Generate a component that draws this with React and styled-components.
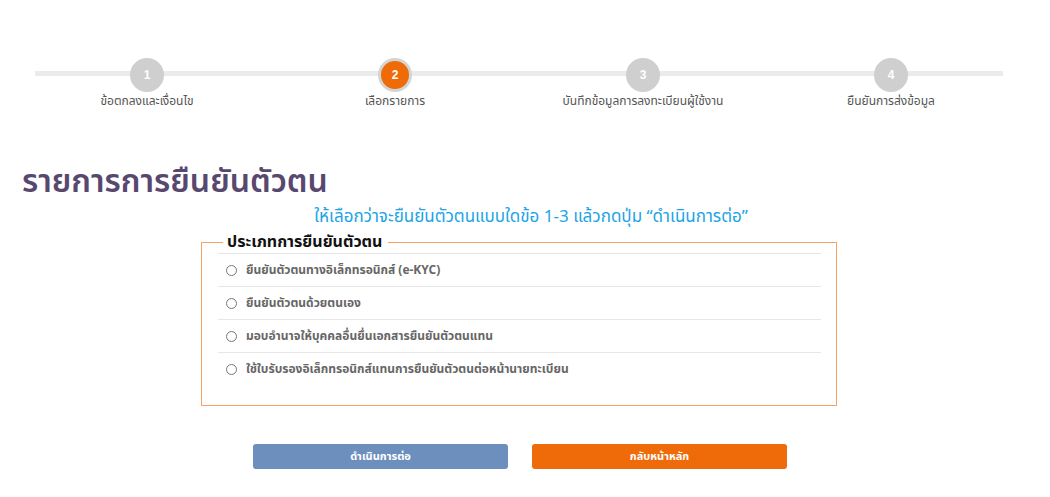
import styled, { createGlobalStyle } from 'styled-components';

const steps = [
  { no: 1, label: 'ข้อตกลงและเงื่อนไข' },
  { no: 2, label: 'เลือกรายการ', active: true },
  { no: 3, label: 'บันทึกข้อมูลการลงทะเบียนผู้ใช้งาน' },
  { no: 4, label: 'ยืนยันการส่งข้อมูล' },
];

const options = [
  'ยืนยันตัวตนทางอิเล็กทรอนิกส์ (e-KYC)',
  'ยืนยันตัวตนด้วยตนเอง',
  'มอบอำนาจให้บุคคลอื่นยื่นเอกสารยืนยันตัวตนแทน',
  'ใช้ใบรับรองอิเล็กทรอนิกส์แทนการยืนยันตัวตนต่อหน้านายทะเบียน',
];

export default function App() {
  return (
    <>
      <GlobalStyle />
      <StPage>
        <StStepper>
          {steps.map((s) => (
            <StStep key={s.no}>
              <StCircle $active={s.active}>{s.no}</StCircle>
              <StStepLabel>{s.label}</StStepLabel>
            </StStep>
          ))}
        </StStepper>

        <StTitle>รายการการยืนยันตัวตน</StTitle>
        <StHint>ให้เลือกว่าจะยืนยันตัวตนแบบใดข้อ 1-3 แล้วกดปุ่ม “ดำเนินการต่อ”</StHint>

        <StFieldset>
          <legend>ประเภทการยืนยันตัวตน</legend>
          <StList>
            {options.map((o) => (
              <StOption key={o}>
                <StRadio type="radio" name="kyc" />
                <span>{o}</span>
              </StOption>
            ))}
          </StList>
        </StFieldset>

        <StButtons>
          <StButton $color="#6d8fbe">ดำเนินการต่อ</StButton>
          <StButton $color="#ef6a09">กลับหน้าหลัก</StButton>
        </StButtons>
      </StPage>
    </>
  );
}

const GlobalStyle = createGlobalStyle`
  body {
    margin: 0;
    background: #fff;
    font-family: Tahoma, "Noto Sans Thai", "Noto Sans", "DejaVu Sans", sans-serif;
  }
`;

const StPage = styled.div`
  width: 1050px;
  padding-top: 58px;
`;

const StStepper = styled.div`
  position: relative;
  margin: 0 35px 0 23px;
  display: grid;
  grid-template-columns: repeat(4, 248px);
  &::before {
    content: '';
    position: absolute;
    left: 12px;
    right: 12px;
    top: 13px;
    height: 5px;
    background: #ebebeb;
  }
`;

const StStep = styled.div`
  position: relative;
  display: flex;
  flex-direction: column;
  align-items: center;
`;

const StCircle = styled.div`
  width: 28px;
  height: 28px;
  border-radius: 50%;
  border: 3px solid ${({ $active }) => ($active ? '#d4d4d4' : '#cfcfcf')};
  background: ${({ $active }) => ($active ? '#ef6a09' : '#cfcfcf')};
  color: #fff;
  font-family: Arial, "Liberation Sans", sans-serif;
  font-size: 12px;
  font-weight: bold;
  display: flex;
  align-items: center;
  justify-content: center;
`;

const StStepLabel = styled.div`
  margin-top: 0;
  font-size: 12px;
  color: #555;
`;

const StTitle = styled.h1`
  margin: 52px 0 0 22px;
  font-size: 32px;
  font-weight: 600;
  line-height: 40px;
  color: #584870;
`;

const StHint = styled.p`
  margin: 2px 0 0;
  padding-left: 12px;
  text-align: center;
  font-size: 17px;
  color: #1ba4e6;
`;

const StFieldset = styled.fieldset`
  margin: 3px 0 0 201px;
  width: 636px;
  height: 173px;
  box-sizing: border-box;
  padding: 0 15px 0 16px;
  border: 1.5px solid #f5a263;
  legend {
    margin-left: 5px;
    padding: 0 6px 0 4px;
    font-size: 16px;
    font-weight: bold;
    color: #111;
    line-height: 18px;
  }
`;

const StList = styled.div`
  margin-top: 2px;
  border-top: 1px solid #e6e6e6;
`;

const StOption = styled.label`
  display: flex;
  align-items: center;
  gap: 9px;
  height: 32px;
  padding-left: 8px;
  border-bottom: 1px solid #e6e6e6;
  font-size: 12px;
  font-weight: bold;
  color: #666;
  &:last-child {
    border-bottom: none;
  }
`;

const StRadio = styled.input`
  margin: 0;
  width: 11px;
  height: 11px;
`;

const StButtons = styled.div`
  margin: 38px 0 0 253px;
  display: flex;
  gap: 24px;
`;

const StButton = styled.button`
  width: 255px;
  height: 25px;
  border: none;
  border-radius: 3px;
  background: ${({ $color }) => $color};
  color: #fff;
  font-family: inherit;
  font-size: 11px;
  font-weight: bold;
`;
